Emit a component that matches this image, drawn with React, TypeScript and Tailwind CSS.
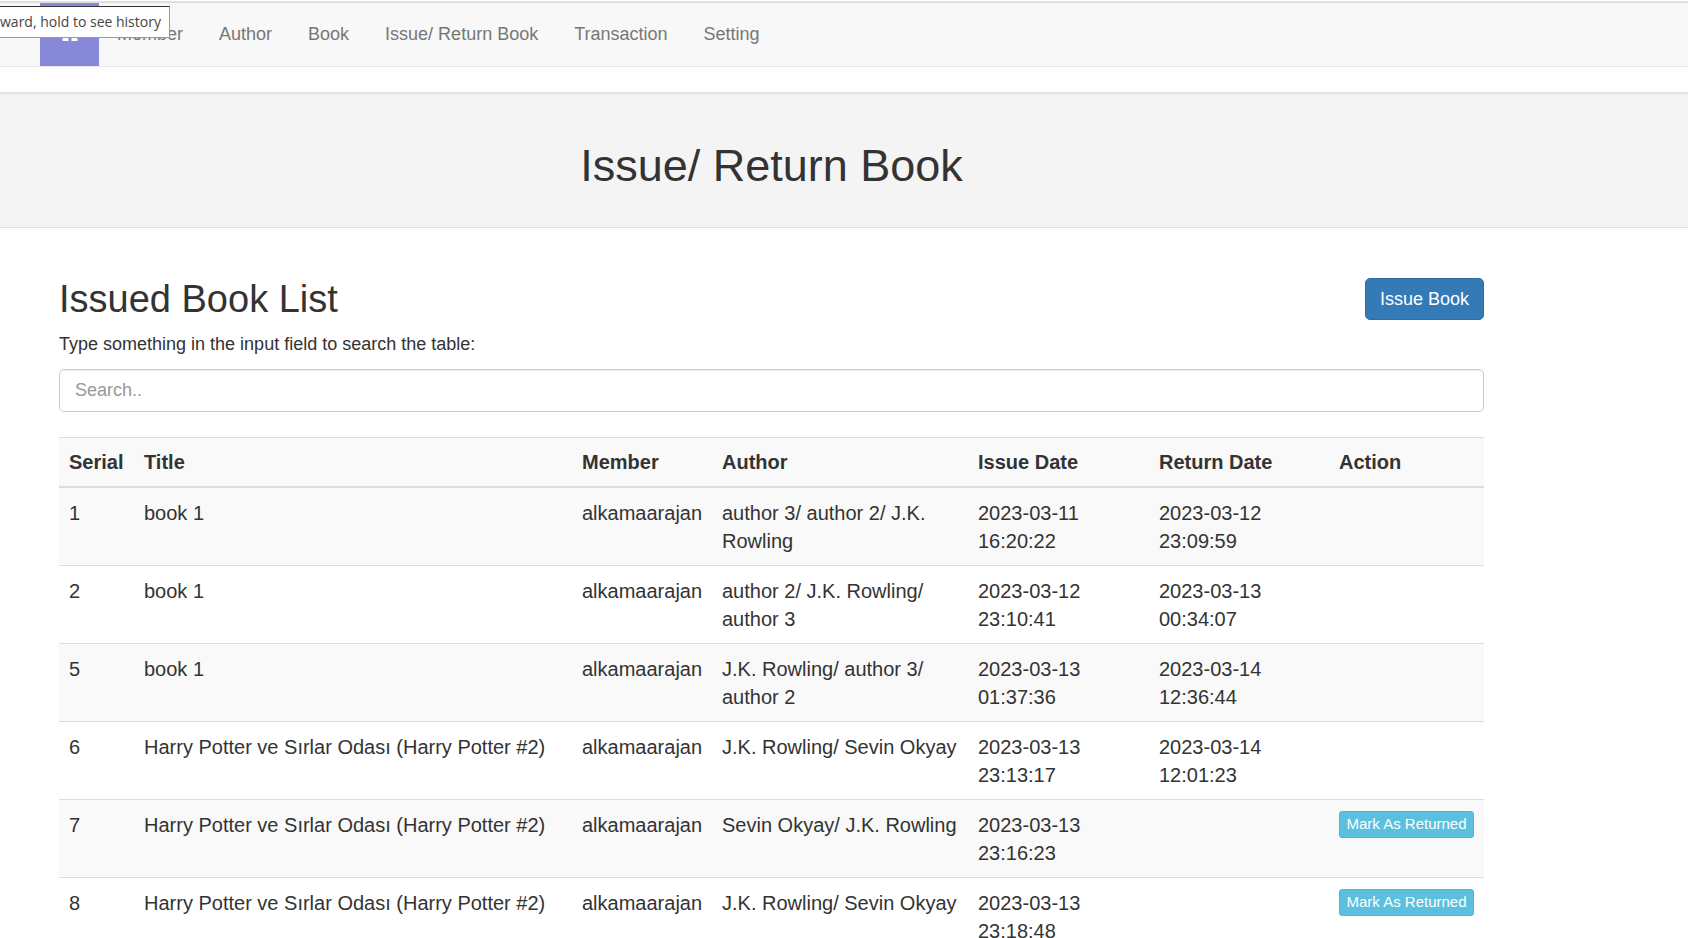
import { useState } from "react";

type Issue = {
  serial: number;
  title: string;
  member: string;
  author: string;
  issued: string;
  returned?: string;
};

const POTTER = "Harry Potter ve Sırlar Odası (Harry Potter #2)";

const issues: Issue[] = [
  { serial: 1, title: "book 1", member: "alkamaarajan", author: "author 3/ author 2/ J.K. Rowling", issued: "2023-03-11 16:20:22", returned: "2023-03-12 23:09:59" },
  { serial: 2, title: "book 1", member: "alkamaarajan", author: "author 2/ J.K. Rowling/ author 3", issued: "2023-03-12 23:10:41", returned: "2023-03-13 00:34:07" },
  { serial: 5, title: "book 1", member: "alkamaarajan", author: "J.K. Rowling/ author 3/ author 2", issued: "2023-03-13 01:37:36", returned: "2023-03-14 12:36:44" },
  { serial: 6, title: POTTER, member: "alkamaarajan", author: "J.K. Rowling/ Sevin Okyay", issued: "2023-03-13 23:13:17", returned: "2023-03-14 12:01:23" },
  { serial: 7, title: POTTER, member: "alkamaarajan", author: "Sevin Okyay/ J.K. Rowling", issued: "2023-03-13 23:16:23" },
  { serial: 8, title: POTTER, member: "alkamaarajan", author: "J.K. Rowling/ Sevin Okyay", issued: "2023-03-13 23:18:48" },
];

const links = ["Member", "Author", "Book", "Issue/ Return Book", "Transaction", "Setting"];
const headings = ["Serial", "Title", "Member", "Author", "Issue Date", "Return Date", "Action"];

function HomeIcon() {
  return (
    <svg viewBox="0 0 22 20" className="h-5 w-[22px]" fill="currentColor" aria-hidden="true">
      <path d="M11 0 1 10H3.500V17H9.500V11H12.500V17H18.500V10H21L18 7V1.500H15.500V4.500Z" />
    </svg>
  );
}

function NavBar() {
  return (
    <nav className="relative mt-px border-t-2 border-b border-t-[#dddfdf] border-b-[#e7e7e7] bg-[#f8f8f8] pl-10">
      <ul className="flex h-[63px] text-lg text-[#777]">
        <li className="flex">
          <a href="#home" aria-label="Home" className="flex w-[59px] items-center justify-center bg-[#8888d8] pb-[2px] text-white">
            <HomeIcon />
          </a>
        </li>
        {links.map((label) => (
          <li key={label} className="flex">
            <a href="#" className="flex items-center px-[18px] pb-[2px]">{label}</a>
          </li>
        ))}
      </ul>
      <div role="tooltip" className="absolute top-[3px] left-0 flex h-8 items-center overflow-hidden border border-l-0 border-[#999] border-t-[#333] bg-white pr-2 font-['Open_Sans',sans-serif] text-sm whitespace-nowrap text-[#444]">
        ward, hold to see history
      </div>
    </nav>
  );
}

export default function App() {
  const [query, setQuery] = useState("");
  const rows = issues.filter((r) => Object.values(r).join(" ").toLowerCase().includes(query.toLowerCase()));

  return (
    <div className="h-screen overflow-hidden bg-white font-['Liberation_Sans',Arial,sans-serif] text-[#333]">
      <NavBar />
      <header className="mt-[25px] border-y border-[#e0e0e0] bg-[#f4f4f4] px-[59px] pt-12 pb-9 shadow-[inset_0_3px_2px_-2px_rgba(0,0,0,0.08)]">
        <h1 className="max-w-[1425px] text-center text-[45px] leading-[50px]">Issue/ Return Book</h1>
      </header>
      <main className="px-[59px] pt-[50px]">
        <div className="max-w-[1425px]">
          <div className="flex items-center justify-between">
            <h2 className="text-[38px] leading-[42px]">Issued Book List</h2>
            <button type="button" className="h-[42px] rounded-[5px] border border-[#2e6da4] bg-[#337ab7] px-[14px] text-lg leading-6 text-white">Issue Book</button>
          </div>
          <label htmlFor="search" className="mt-3 block text-lg leading-6">Type something in the input field to search the table:</label>
          <input
            id="search"
            type="text"
            value={query}
            onChange={(e) => setQuery(e.target.value)}
            placeholder="Search.."
            className="mt-[13px] block h-[43px] w-full rounded-[5px] border border-[#ccc] px-[15px] text-lg shadow-[inset_0_1px_1px_rgba(0,0,0,0.075)] placeholder:text-[#999]"
          />
          <table className="mt-[25px] w-full table-fixed border-separate border-spacing-0 text-left text-xl leading-7">
            <colgroup>
              <col className="w-[75px]" />
              <col className="w-[438px]" />
              <col className="w-[140px]" />
              <col className="w-[256px]" />
              <col className="w-[181px]" />
              <col className="w-[180px]" />
              <col className="w-[155px]" />
            </colgroup>
            <thead>
              <tr className="bg-[#f9f9f9]">
                {headings.map((h) => (
                  <th key={h} scope="col" className="border-t border-b-2 border-[#ddd] p-[10px] font-bold">{h}</th>
                ))}
              </tr>
            </thead>
            <tbody>
              {rows.map((r) => (
                <tr key={r.serial} className="align-top odd:bg-[#f9f9f9] *:border-b *:border-[#ddd] *:px-[10px] *:pt-[11px] *:pb-[10px]">
                  <td>{r.serial}</td>
                  <td>{r.title}</td>
                  <td>{r.member}</td>
                  <td>{r.author}</td>
                  <td>{r.issued}</td>
                  <td>{r.returned}</td>
                  <td>
                    {!r.returned && (
                      <button type="button" className="block h-[27px] w-full rounded-[3px] border border-[#46b8da] bg-[#5bc0de] pb-[2px] text-[15px] leading-5 whitespace-nowrap text-white">Mark As Returned</button>
                    )}
                  </td>
                </tr>
              ))}
            </tbody>
          </table>
        </div>
      </main>
    </div>
  );
}
